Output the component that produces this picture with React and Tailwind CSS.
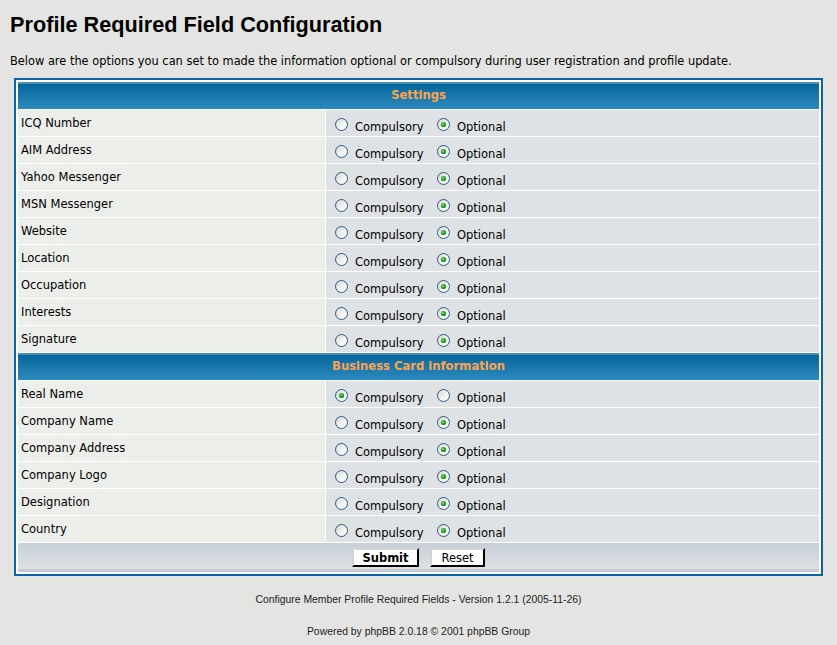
import React from "react";

const verdana = { fontFamily: '"DejaVu Sans", Verdana, sans-serif' };

function Radio({ checked }) {
  return (
    <svg width="13" height="13" viewBox="0 0 13 13" className="shrink-0 block">
      <defs>
        <linearGradient id="rg" x1="0" y1="0" x2="1" y2="1">
          <stop offset="0" stopColor="#d6d6d0" />
          <stop offset="0.6" stopColor="#f4f4f1" />
          <stop offset="1" stopColor="#ffffff" />
        </linearGradient>
        <radialGradient id="dot" cx="0.4" cy="0.4" r="0.6">
          <stop offset="0" stopColor="#8fe08f" />
          <stop offset="0.5" stopColor="#2fae2f" />
          <stop offset="1" stopColor="#17851a" />
        </radialGradient>
      </defs>
      <circle cx="6.5" cy="6.5" r="6" fill="url(#rg)" stroke="#2a5a8a" strokeWidth="1" />
      {checked && <circle cx="6.5" cy="6.5" r="2.6" fill="url(#dot)" />}
    </svg>
  );
}

function Row({ label, comp }) {
  return (
    <div className="grid grid-cols-[307px_1fr] gap-px h-[26px]">
      <div className="bg-[#ECEEEA] pl-[3px] text-[11.5px] leading-[26px] text-black" style={verdana}>
        {label}
      </div>
      <div className="bg-[#DEE2E5] flex items-start text-[11.5px] leading-[13px] text-black" style={verdana}>
        <div className="w-[111px] pl-[9px] flex items-start">
          <div className="mt-[8px]"><Radio checked={comp} /></div>
          <span className="ml-[7px] mt-[11px]">Compulsory</span>
        </div>
        <div className="flex items-start">
          <div className="mt-[8px]"><Radio checked={!comp} /></div>
          <span className="ml-[7px] mt-[11px]">Optional</span>
        </div>
      </div>
    </div>
  );
}

function Header({ title }) {
  return (
    <div className="h-[27px] flex flex-col">
      <div className="h-[2px] bg-[#4d8db2]" />
      <div
        className="flex-1 flex items-center justify-center bg-gradient-to-b from-[#03669c] to-[#2b8abd] text-[11.6px] font-bold text-[#FFA34F] pb-[1px]"
        style={verdana}
      >
        {title}
      </div>
    </div>
  );
}

export default function App() {
  const settings = [
    "ICQ Number",
    "AIM Address",
    "Yahoo Messenger",
    "MSN Messenger",
    "Website",
    "Location",
    "Occupation",
    "Interests",
    "Signature",
  ];
  const business = [
    ["Real Name", true],
    ["Company Name", false],
    ["Company Address", false],
    ["Company Logo", false],
    ["Designation", false],
    ["Country", false],
  ];
  return (
    <div className="min-h-[645px] w-[837px] bg-[#E4E5E2] text-black">
      <h1
        className="pl-[10px] pt-[12px] text-[21.7px] leading-[26px] font-bold"
        style={{ fontFamily: '"Liberation Sans", Arial, sans-serif' }}
      >
        Profile Required Field Configuration
      </h1>
      <p className="pl-[10px] mt-[17px] text-[11.4px] leading-[13px]" style={verdana}>
        Below are the options you can set to made the information optional or compulsory during user registration and profile update.
      </p>
      <div className="mx-[14px] mt-[10px] border-2 border-[#0C64A0] bg-white p-[2px] flex flex-col gap-px">
        <Header title="Settings" />
        {settings.map((s) => (
          <Row key={s} label={s} comp={false} />
        ))}
        <Header title="Business Card information" />
        {business.map(([s, c]) => (
          <Row key={s} label={s} comp={c} />
        ))}
        <div className="h-[29px] flex flex-col">
          <div className="flex-1 bg-gradient-to-b from-[#C7CED6] to-[#DEE2E6] flex justify-center items-start pt-[5px] gap-[11px]">
            <button
              className="w-[67px] h-[19px] bg-white border-2 border-t-[#d4d4d4] border-l-[#d4d4d4] border-r-black border-b-black text-[11.5px] font-bold leading-[14px] text-black"
              style={verdana}
            >
              Submit
            </button>
            <button
              className="w-[55px] h-[19px] bg-white border-2 border-t-[#d4d4d4] border-l-[#d4d4d4] border-r-black border-b-black text-[11.5px] leading-[14px] text-black"
              style={verdana}
            >
              Reset
            </button>
          </div>
          <div className="h-[3px] bg-[#C5CBD0]" />
        </div>
      </div>
      <div
        className="mt-[18px] text-center text-[10.4px] leading-[12px] text-[#222]"
        style={{ fontFamily: '"Liberation Sans", Tahoma, sans-serif' }}
      >
        Configure Member Profile Required Fields - Version 1.2.1 (2005-11-26)
      </div>
      <div
        className="mt-[20px] text-center text-[10.4px] leading-[12px] text-[#222]"
        style={{ fontFamily: '"Liberation Sans", Tahoma, sans-serif' }}
      >
        Powered by phpBB 2.0.18 © 2001 phpBB Group
      </div>
    </div>
  );
}
